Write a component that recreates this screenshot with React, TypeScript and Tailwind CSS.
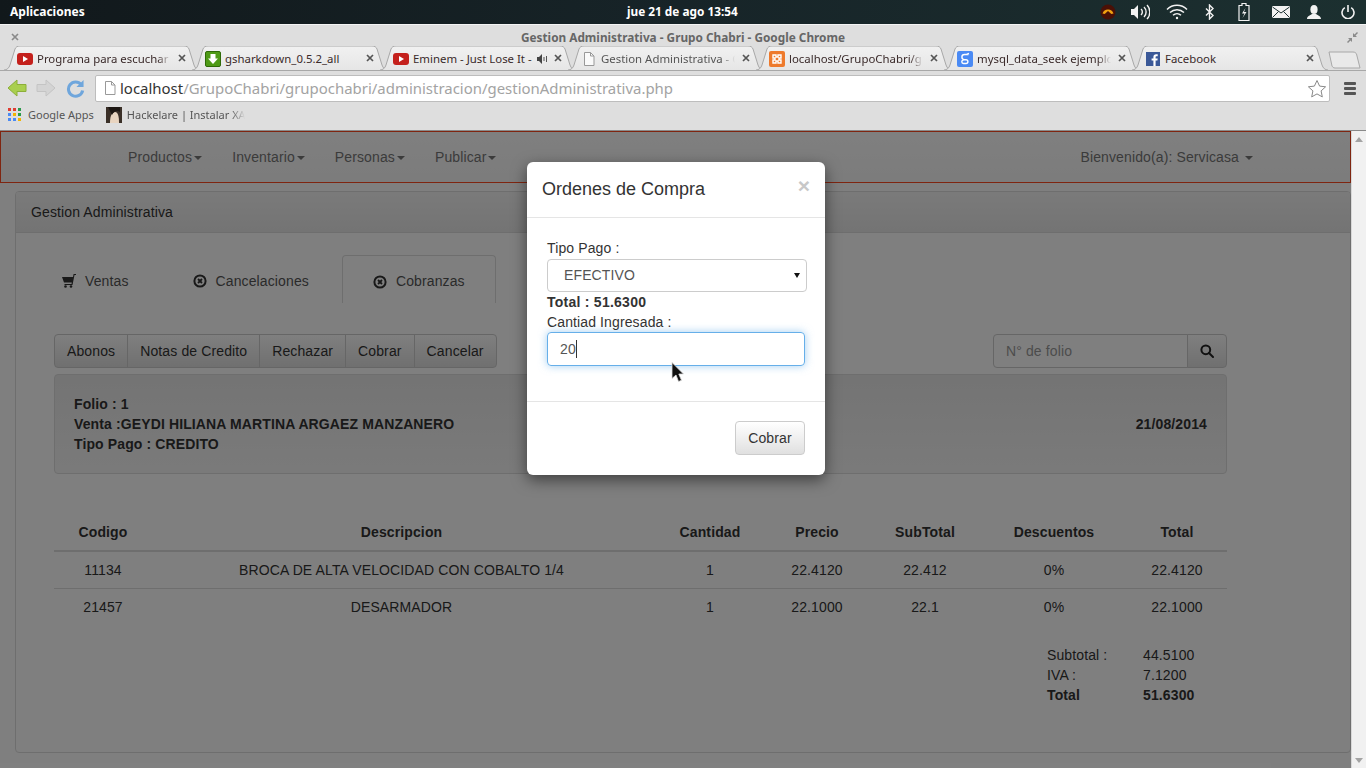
import React from "react";

const X = ({ c = "#555", s = 8 }: { c?: string; s?: number }) => (
  <svg width={s} height={s} viewBox="0 0 8 8"><path d="M1 1L7 7M7 1L1 7" stroke={c} strokeWidth="1.7" /></svg>
);
const Yt = () => (
  <svg width="16" height="12" viewBox="0 0 16 12"><rect width="16" height="12" rx="3" fill="#c4201c" /><path d="M6 3l5 3-5 3z" fill="#fff" /></svg>
);
const Dl = () => (
  <svg width="16" height="16" viewBox="0 0 16 16"><rect x=".5" y=".5" width="15" height="15" rx="1.5" fill="#4f9a16" stroke="#2f6a08" /><path d="M5.500 3h5v4.500H13L8 13 3 7.500h2.500z" fill="#fff" /></svg>
);
const Doc = () => (
  <svg width="14" height="16" viewBox="0 0 14 16"><path d="M2.500 1.500h6l3.500 3.500v9.500h-9.500z" fill="#fafafa" stroke="#999" /><path d="M8.500 1.500V5H12" fill="none" stroke="#999" /></svg>
);
const Xampp = () => (
  <svg width="16" height="16" viewBox="0 0 16 16"><rect width="16" height="16" rx="2" fill="#ee7a2c" /><path d="M4 4h3v2h2V4h3v3h-2v2h2v3H9v-2H7v2H4V9h2V7H4z" fill="none" stroke="#fff" strokeWidth="1.4" /></svg>
);
const G = () => (
  <svg width="16" height="16" viewBox="0 0 16 16"><rect width="16" height="16" rx="2" fill="#4a8af4" /><path d="M11.500 3.500H7.500a2.600 2.600 0 0 0 0 5.200h1.500a1.900 1.900 0 0 1 0 3.800H6.500a1.700 1.700 0 0 1 0-3.400M9.500 3.500l2.500-1" fill="none" stroke="#fff" strokeWidth="1.4" /></svg>
);
const Fb = () => (
  <svg width="14" height="14" viewBox="0 0 14 14"><rect width="14" height="14" fill="#3b5998" /><path d="M9.600 14V8.600h1.800l.3-2.100H9.600V5.200c0-.6.2-1 1-1h1.100V2.300c-.2 0-.8-.1-1.600-.1-1.600 0-2.700 1-2.700 2.800v1.500H5.600v2.100h1.800V14z" fill="#fff" /></svg>
);

const tabs = [
  { icon: <Yt />, title: "Programa para escuchar" },
  { icon: <Dl />, title: "gsharkdown_0.5.2_all", fadeOff: true },
  { icon: <Yt />, title: "Eminem - Just Lose It -", audio: true },
  { icon: <Doc />, title: "Gestion Administrativa - G", active: true },
  { icon: <Xampp />, title: "localhost/GrupoChabri/g" },
  { icon: <G />, title: "mysql_data_seek ejemplo" },
  { icon: <Fb />, title: "Facebook", fadeOff: true },
];

function ChromeTab({ t, first }: { t: (typeof tabs)[number]; first: boolean }) {
  return (
    <div className={`relative w-[196px] h-[24px] shrink-0 ${first ? "" : "-ml-[8px]"}`}>
      <svg className="absolute inset-0" width="196" height="24" viewBox="0 0 196 24">
        <defs>
          <linearGradient id="tabg" x1="0" y1="0" x2="0" y2="1">
            <stop offset="0" stopColor="#f1f1f1" />
            <stop offset="1" stopColor="#e6e6e6" />
          </linearGradient>
        </defs>
        <path d="M0 24C3 24 5 22 6 19L11 3C12 1 13 0 16 0L180 0C183 0 184 1 185 3L190 19C191 22 193 24 196 24Z" fill="url(#tabg)" />
        <path d="M0 24C3 24 5 22 6 19L11 3C12 1 13 0 16 0L180 0C183 0 184 1 185 3L190 19C191 22 193 24 196 24" fill="none" stroke="#a8a8a8" />
      </svg>
      <div className="relative h-full flex items-center pl-[13px] pt-[1px]">
        <span className="w-[16px] flex justify-center shrink-0">{t.icon}</span>
        <span
          className={`ml-[4px] text-[11.4px] whitespace-nowrap overflow-hidden ${t.active ? "text-[#555]" : "text-[#3a2a2a]"}`}
          style={{ width: t.audio ? 120 : 134, WebkitMaskImage: t.fadeOff || t.audio ? undefined : "linear-gradient(to right,#000 90%,transparent)" }}
        >
          {t.title}
        </span>
        {t.audio && (
          <svg className="ml-[4px] shrink-0" width="12" height="10" viewBox="0 0 12 10"><path d="M0 3h2l3-3v10L2 7H0z" fill="#444" /><path d="M7 3v4M9.500 2v6" stroke="#555" /></svg>
        )}
        <span className="absolute left-[174px] top-[8px]"><X /></span>
      </div>
    </div>
  );
}

const Caret = () => <span className="ml-[2px] inline-block align-middle w-0 h-0 border-x-[4px] border-t-[4px] border-x-transparent border-t-[#777]" />;

const Ban = () => (
  <svg width="14" height="14" viewBox="0 0 14 14"><circle cx="7" cy="7" r="5.600" fill="none" stroke="#333" strokeWidth="2" /><path d="M5 5l4 4M9 5l-4 4" stroke="#333" strokeWidth="1.800" /></svg>
);
const Cart = () => (
  <svg width="14" height="14" viewBox="0 0 14 14"><path d="M0 3h11l.6-3H14v1h-1.500L10.500 11H2.500v-1h7l.3-1.500H2z" fill="#333" /><circle cx="3.500" cy="12.500" r="1.300" fill="#333" /><circle cx="9" cy="12.500" r="1.300" fill="#333" /></svg>
);

const cols = "grid grid-cols-[98px_499px_118px_96px_120px_138px_104px]";
const head = ["Codigo", "Descripcion", "Cantidad", "Precio", "SubTotal", "Descuentos", "Total"];
const rows = [
  ["11134", "BROCA DE ALTA VELOCIDAD CON COBALTO 1/4", "1", "22.4120", "22.412", "0%", "22.4120"],
  ["21457", "DESARMADOR", "1", "22.1000", "22.1", "0%", "22.1000"],
];

export default function App() {
  return (
    <div className="w-[1366px] h-[768px] overflow-hidden flex flex-col font-['Liberation_Sans',sans-serif] text-[14px] text-[#333] bg-white">
      {/* GNOME panel */}
      <div className="h-[24px] shrink-0 relative flex items-center justify-between pl-[10px] pr-[11px] bg-gradient-to-r from-[#11181b] via-[#172428] to-[#1c3030] font-['Noto_Sans',sans-serif] font-bold text-[12px] text-white">
        <span>Aplicaciones</span>
        <span className="absolute left-[627px] text-[11.800px]">jue 21 de ago 13:54</span>
        <div className="flex items-center">
          <svg className="mr-[14px]" width="16" height="16" viewBox="0 0 16 16"><circle cx="8" cy="8" r="7.500" fill="#4a1006" /><path d="M2.500 9.500a5.800 5.800 0 0 1 11 0l-2.200.5L8 7 4.700 10z" fill="#f0a010" /></svg>
          <svg className="mr-[16px]" width="20" height="16" viewBox="0 0 20 16" fill="none"><path d="M1 5h3l4-4v14l-4-4H1z" fill="#f2f2f2" /><path d="M11 5a4 4 0 0 1 0 6M14 3a7 7 0 0 1 0 10M17 1a10 10 0 0 1 0 14" stroke="#f2f2f2" strokeWidth="1.400" /></svg>
          <svg className="mr-[17px]" width="22" height="16" viewBox="0 0 22 16" fill="none" stroke="#f2f2f2" strokeWidth="1.500"><path d="M1 5.500a14 14 0 0 1 20 0M4 8.500a10 10 0 0 1 14 0M7 11.200a6 6 0 0 1 8 0" /><circle cx="11" cy="14" r="1.200" fill="#f2f2f2" stroke="none" /></svg>
          <svg className="mr-[23px]" width="10" height="16" viewBox="0 0 10 16" fill="none" stroke="#f2f2f2" strokeWidth="1.400"><path d="M1 4.500l7 7-3.500 3.500V1L8 4.500l-7 7" /></svg>
          <svg className="mr-[22px]" width="12" height="20" viewBox="0 0 12 20" fill="none"><path d="M4 1.500h4v2h3v15H1v-15h3z" stroke="#f2f2f2" strokeWidth="1.200" /><path d="M7.500 6L4 11.500h2.500L4.500 16 8.500 10H6z" fill="#f2f2f2" /></svg>
          <svg className="mr-[17px]" width="18" height="12" viewBox="0 0 18 12"><rect width="18" height="12" rx="1" fill="#f2f2f2" /><path d="M0.500 1L9 7l8.500-6M0.500 11.500L6.500 5.500M17.500 11.500L11.500 5.500" stroke="#1c3030" fill="none" /></svg>
          <svg className="mr-[20px]" width="14" height="14" viewBox="0 0 14 14"><ellipse cx="7" cy="4.500" rx="3.600" ry="4.500" fill="#f2f2f2" /><path d="M0 14c0-3 3-3.500 5-5h4c2 1.500 5 2 5 5z" fill="#f2f2f2" /></svg>
          <svg width="14" height="14" viewBox="0 0 14 14" fill="none" stroke="#f2f2f2" strokeWidth="1.600"><path d="M7 0v7" /><path d="M3.800 2.600a6 6 0 1 0 6.400 0" /></svg>
        </div>
      </div>

      {/* Chrome frame */}
      <div className="h-[107px] shrink-0 bg-[#dedede] border-t border-[#f4f4f4] border-b border-b-[#8a8a8a] flex flex-col">
        <div className="h-[21px] shrink-0 pt-[5px] relative flex items-center justify-center font-['Noto_Sans',sans-serif] font-bold text-[11.800px] text-[#666]">
          <span className="absolute left-[11px] top-[8px]"><X c="#8a8a8a" s={8} /></span>
          Gestion Administrativa - Grupo Chabri - Google Chrome
          <svg className="absolute right-[8px] top-[7px]" width="11" height="11" viewBox="0 0 11 11"><path d="M6 5V1l1.500 1.500L10 0l1 1-2.500 2.500L10 5zM5 6v4L3.500 8.500 1 11 0 10l2.500-2.500L1 6z" fill="#8a8a8a" /></svg>
        </div>
        <div className="h-[25px] shrink-0 flex items-start pl-[4px] font-['Noto_Sans',sans-serif] border-b border-[#a8a8a8] relative">
          {tabs.map((t, i) => <ChromeTab key={i} t={t} first={i === 0} />)}
          <svg className="absolute left-[1328px] top-[5px]" width="33" height="18" viewBox="0 0 33 18"><path d="M1 1h24c2 0 3 1 3.500 2L32 17H7c-1.500 0-2.500-1-3-2z" fill="#e9e9e9" stroke="#a8a8a8" /></svg>
        </div>
        <div className="h-[34px] shrink-0 flex items-center pl-[7px] pr-[9px] font-['Noto_Sans',sans-serif]">
          <svg width="20" height="20" viewBox="0 0 20 20"><path d="M1 10l9-8v4.500h9v7h-9V18z" fill="#a9cf4e" stroke="#8cae38" /></svg>
          <svg className="ml-[9px]" width="20" height="20" viewBox="0 0 20 20"><path d="M19 10l-9-8v4.500H1v7h9V18z" fill="#d4d4d4" stroke="#c4c4c4" /></svg>
          <svg className="ml-[10px]" width="19" height="19" viewBox="0 0 20 20" fill="none"><path d="M16 6a7.500 7.500 0 1 0 1.500 6" stroke="#6fa6dc" strokeWidth="3.200" /><path d="M11 8.500h7.500V1z" fill="#6fa6dc" /></svg>
          <div className="ml-[10px] w-[1235px] h-[27px] bg-white border border-[#bdbdbd] rounded-[2px] flex items-center pl-[7px] pr-[2px]">
            <svg width="14" height="16" viewBox="0 0 14 16"><path d="M2.500 1.500h6l3.500 3.500v9.500h-9.500z" fill="#fff" stroke="#999" /><path d="M8.500 1.500V5H12" fill="none" stroke="#999" /></svg>
            <span className="ml-[3px] text-[14.950px] whitespace-nowrap text-[#a3a3a3]"><span className="text-[#333]">localhost</span>/GrupoChabri/grupochabri/administracion/gestionAdministrativa.php</span>
            <svg className="ml-auto" width="20" height="19" viewBox="0 0 20 19"><path d="M10 1.500l2.600 5.600 6 .7-4.500 4.100 1.200 6-5.300-3-5.300 3 1.200-6L1.400 7.800l6-.7z" fill="#fff" stroke="#888" /></svg>
          </div>
          <div className="ml-[14px] w-[12px] flex flex-col gap-[2px]">
            <span className="h-[3px] bg-[#555] rounded-[1px]" /><span className="h-[3px] bg-[#555] rounded-[1px]" /><span className="h-[3px] bg-[#555] rounded-[1px]" />
          </div>
        </div>
        <div className="flex-1 flex items-center pl-[8px] pb-[5px] font-['Noto_Sans',sans-serif] text-[11px] text-[#555]">
          <svg width="14" height="14" viewBox="0 0 14 14">
            <rect x="0" y="0" width="3" height="3" fill="#e03c31" /><rect x="5" y="0" width="3" height="3" fill="#e03c31" /><rect x="10" y="0" width="3" height="3" fill="#2a9a4a" />
            <rect x="0" y="5" width="3" height="3" fill="#4a8af4" /><rect x="5" y="5" width="3" height="3" fill="#f2b400" /><rect x="10" y="5" width="3" height="3" fill="#2a9a4a" />
            <rect x="0" y="10" width="3" height="3" fill="#4a8af4" /><rect x="5" y="10" width="3" height="3" fill="#4a8af4" /><rect x="10" y="10" width="3" height="3" fill="#f2b400" />
          </svg>
          <span className="ml-[6px]">Google Apps</span>
          <svg className="ml-[12px]" width="16" height="16" viewBox="0 0 16 16"><rect width="16" height="16" fill="#3b3028" /><path d="M4 16c0-6 1-10 5-11 3 0 4 4 4 11z" fill="#e8d4c0" /><path d="M2 0h12v5c-3-2-6-1-8 3z" fill="#1c1612" /></svg>
          <span className="ml-[5px] w-[118px] whitespace-nowrap overflow-hidden" style={{ WebkitMaskImage: "linear-gradient(to right,#000 88%,transparent)" }}>Hackelare | Instalar XA</span>
        </div>
      </div>

      {/* Viewport */}
      <div className="flex-1 flex min-h-0 tracking-[0.12px]">
        <div className="relative w-[1351px] overflow-hidden bg-white">
          <div className="h-[52px] border border-[#ff4a20] bg-gradient-to-b from-white to-[#f8f8f8] flex items-center pl-[127px] pr-[97px] text-[#777]">
            <div className="flex gap-[30px]">
              {["Productos", "Inventario", "Personas", "Publicar"].map((n) => <span key={n}>{n}<Caret /></span>)}
            </div>
            <span className="ml-auto">Bienvenido(a): Servicasa <Caret /></span>
          </div>

          <div className="ml-[15px] mt-[8px] h-[562px] border border-[#ddd] rounded-[4px]">
            <div className="h-[41px] px-[15px] flex items-center bg-gradient-to-b from-[#f5f5f5] to-[#e8e8e8] border-b border-[#ddd] rounded-t-[3px]">Gestion Administrativa</div>
            <div className="pt-[22px] pl-[16px] flex text-[#555]">
              <div className="h-[48px] px-[30px] pt-[4px] flex items-center gap-[9px]"><Cart />Ventas</div>
              <div className="ml-[4px] h-[48px] px-[30px] pt-[4px] flex items-center gap-[9px]"><Ban />Cancelaciones</div>
              <div className="ml-[3px] h-[48px] px-[30px] pt-[4px] flex items-center gap-[9px] border-x border-t border-[#ddd] rounded-t-[4px]"><Ban />Cobranzas</div>
            </div>

            <div className="pl-[38px] w-[1211px]">
              <div className="mt-[31px] flex justify-between">
                <div className="h-[34px] flex border border-[#ccc] rounded-[4px] bg-gradient-to-b from-white to-[#e0e0e0] divide-x divide-[#ccc]">
                  {["Abonos", "Notas de Credito", "Rechazar", "Cobrar", "Cancelar"].map((b) => (
                    <span key={b} className="px-[12px] flex items-center">{b}</span>
                  ))}
                </div>
                <div className="h-[34px] flex">
                  <div className="w-[195px] border border-[#ccc] rounded-l-[4px] px-[12px] flex items-center text-[#999] bg-white">N° de folio</div>
                  <div className="w-[40px] -ml-[1px] border border-[#ccc] rounded-r-[4px] flex items-center justify-center bg-gradient-to-b from-white to-[#e0e0e0]">
                    <svg width="14" height="14" viewBox="0 0 14 14" fill="none" stroke="#222" strokeWidth="2"><circle cx="5.800" cy="5.800" r="4.400" /><path d="M9 9l4 4" strokeLinecap="round" /></svg>
                  </div>
                </div>
              </div>

              <div className="mt-[6px] h-[100px] border border-[#dcdcdc] rounded-[4px] bg-gradient-to-b from-[#e8e8e8] to-[#f5f5f5] px-[19px] py-[19px] flex justify-between items-center font-bold">
                <div className="leading-[20px]">
                  <div>Folio : 1</div>
                  <div>Venta :GEYDI HILIANA MARTINA ARGAEZ MANZANERO</div>
                  <div>Tipo Pago : CREDITO</div>
                </div>
                <div>21/08/2014</div>
              </div>

              <div className="mt-[40px] w-[1173px]">
                <div className={`${cols} h-[38px] pt-[1px] items-center border-b-2 border-[#ddd] font-bold text-center`}>
                  {head.map((h, j) => <div key={h} className={j === 6 ? "pl-[4px]" : ""}>{h}</div>)}
                </div>
                {rows.map((r, i) => (
                  <div key={i} className={`${cols} h-[37px] items-center border-b ${i === 0 ? "border-[#ddd]" : "border-transparent"} text-center`}>
                    {r.map((c, j) => <div key={j} className={j === 6 ? "pl-[4px]" : ""}>{c}</div>)}
                  </div>
                ))}
              </div>

              <div className="mt-[19px] ml-[993px] grid grid-cols-[96px_90px] leading-[20px]">
                <span>Subtotal :</span><span>44.5100</span>
                <span>IVA :</span><span>7.1200</span>
                <span className="font-bold">Total</span><span className="font-bold">51.6300</span>
              </div>
            </div>
          </div>

          {/* Backdrop + modal */}
          <div className="absolute inset-0 bg-black/50" />
          <div className="absolute left-[527px] top-[31px] w-[298px] h-[313px] bg-white rounded-[6px] shadow-[0_5px_15px_rgba(0,0,0,0.5)]">
            <div className="h-[56px] border-b border-[#e5e5e5] relative flex items-center pl-[15px] text-[18px] tracking-normal">
              Ordenes de Compra
              <span className="absolute right-[15px] top-[12px] text-[21px] font-bold text-[#c8c8c8] leading-[24px]">×</span>
            </div>
            <div className="h-[184px] border-b border-[#e5e5e5] pt-[20px] pl-[20px] leading-[20px]">
              <div>Tipo Pago :</div>
              <div className="mt-px w-[260px] h-[33px] pb-[1px] border border-[#ccc] rounded-[4px] flex items-center justify-between pl-[16px] pr-[6px] text-[#555]">
                EFECTIVO
                <svg width="6" height="5" viewBox="0 0 6 5"><path d="M0 0h6L3 5z" fill="#111" /></svg>
              </div>
              <div className="font-bold tracking-[0.25px]">Total : 51.6300</div>
              <div>Cantiad Ingresada :</div>
              <div className="w-[258px] h-[34px] border border-[#66afe9] rounded-[4px] flex items-center pl-[12px] text-[#555] shadow-[0_0_8px_rgba(102,175,233,0.6)]">
                20<span className="w-px h-[18px] bg-[#333]" />
              </div>
            </div>
            <div className="pt-[19px] pr-[20px] flex justify-end">
              <div className="w-[70px] h-[34px] border border-[#ccc] rounded-[4px] flex items-center justify-center bg-gradient-to-b from-white to-[#e0e0e0]">Cobrar</div>
            </div>
            <svg className="absolute left-[144px] top-[200px]" width="13" height="21" viewBox="0 0 13 21"><path d="M1 .5v16l4-3.500 2.500 6.500 3-1.200-2.700-6.300H12.500z" fill="#111" stroke="#ddd" strokeWidth=".8" /></svg>
          </div>
        </div>
        <div className="w-[15px] bg-[#f1f1f1] border-l border-[#d8d8d8] flex flex-col items-center justify-between pt-[6px] pb-[5px]">
          <svg width="8" height="5" viewBox="0 0 8 5"><path d="M0 5h8L4 0z" fill="#a3a3a3" /></svg>
          <svg width="8" height="5" viewBox="0 0 8 5"><path d="M0 0h8L4 5z" fill="#a3a3a3" /></svg>
        </div>
      </div>
    </div>
  );
}
